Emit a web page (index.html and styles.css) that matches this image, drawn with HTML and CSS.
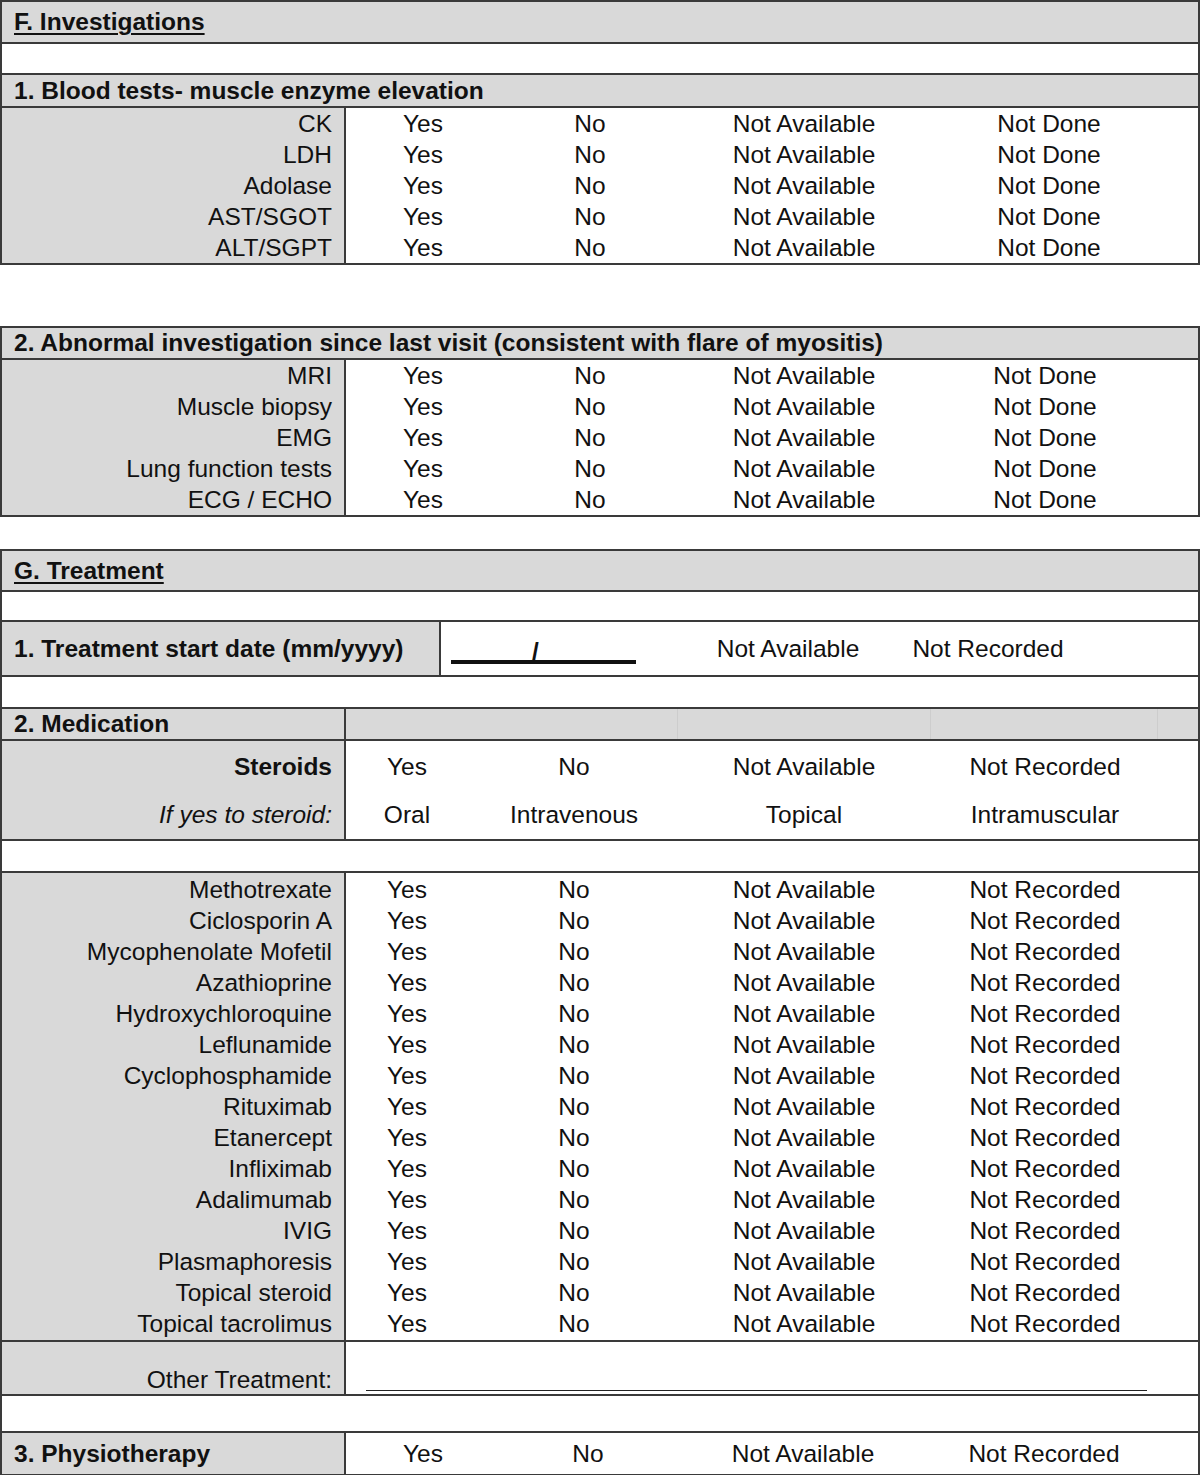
FILE: index.html
```html
<!DOCTYPE html>
<html lang="en">
<head>
<meta charset="utf-8">
<title>Investigations and Treatment</title>
<link rel="stylesheet" href="styles.css">
</head>
<body>
<div class="page">

  <section class="box box-f">
    <div class="row head"><span class="title">F. Investigations</span></div>
    <div class="row blank b1"></div>
    <div class="row sub">1. Blood tests- muscle enzyme elevation</div>
    <div class="opts">
      <div class="labels">
        <div class="ln">CK</div>
        <div class="ln">LDH</div>
        <div class="ln">Adolase</div>
        <div class="ln">AST/SGOT</div>
        <div class="ln">ALT/SGPT</div>
      </div>
      <div class="vals cols-a">
        <div>Yes</div><div>No</div><div>Not Available</div><div>Not Done</div>
        <div>Yes</div><div>No</div><div>Not Available</div><div>Not Done</div>
        <div>Yes</div><div>No</div><div>Not Available</div><div>Not Done</div>
        <div>Yes</div><div>No</div><div>Not Available</div><div>Not Done</div>
        <div>Yes</div><div>No</div><div>Not Available</div><div>Not Done</div>
      </div>
    </div>
  </section>

  <section class="box box-f2">
    <div class="row sub sub2">2. Abnormal investigation since last visit (consistent with flare of myositis)</div>
    <div class="opts">
      <div class="labels">
        <div class="ln">MRI</div>
        <div class="ln">Muscle biopsy</div>
        <div class="ln">EMG</div>
        <div class="ln">Lung function tests</div>
        <div class="ln">ECG / ECHO</div>
      </div>
      <div class="vals cols-b">
        <div>Yes</div><div>No</div><div>Not Available</div><div>Not Done</div>
        <div>Yes</div><div>No</div><div>Not Available</div><div>Not Done</div>
        <div>Yes</div><div>No</div><div>Not Available</div><div>Not Done</div>
        <div>Yes</div><div>No</div><div>Not Available</div><div>Not Done</div>
        <div>Yes</div><div>No</div><div>Not Available</div><div>Not Done</div>
      </div>
    </div>
  </section>

  <section class="box box-g">
    <div class="row head head-g"><span class="title">G. Treatment</span></div>
    <div class="row blank b2"></div>
    <div class="row split date-row">
      <div class="cell-label wide">1. Treatment start date (mm/yyyy)</div>
      <div class="date-vals">
        <span class="date-field"><span class="slash">/</span></span>
        <span class="dv dv1">Not Available</span>
        <span class="dv dv2">Not Recorded</span>
      </div>
    </div>
    <div class="row blank b3"></div>
    <div class="row split med-head">
      <div class="cell-label bold-left">2. Medication</div>
      <div class="med-head-cells">
        <div></div><div></div><div></div><div></div>
      </div>
    </div>
    <div class="row split steroid-row">
      <div class="labels steroid-labels">
        <div class="sl strong">Steroids</div>
        <div class="sl ital">If yes to steroid:</div>
      </div>
      <div class="vals cols-m steroid-vals">
        <div>Yes</div><div>No</div><div>Not Available</div><div>Not Recorded</div>
        <div>Oral</div><div>Intravenous</div><div>Topical</div><div>Intramuscular</div>
      </div>
    </div>
    <div class="row blank b4"></div>
    <div class="row opts med-list">
      <div class="labels">
        <div class="ln">Methotrexate</div>
        <div class="ln">Ciclosporin A</div>
        <div class="ln">Mycophenolate Mofetil</div>
        <div class="ln">Azathioprine</div>
        <div class="ln">Hydroxychloroquine</div>
        <div class="ln">Leflunamide</div>
        <div class="ln">Cyclophosphamide</div>
        <div class="ln">Rituximab</div>
        <div class="ln">Etanercept</div>
        <div class="ln">Infliximab</div>
        <div class="ln">Adalimumab</div>
        <div class="ln">IVIG</div>
        <div class="ln">Plasmaphoresis</div>
        <div class="ln">Topical steroid</div>
        <div class="ln">Topical tacrolimus</div>
      </div>
      <div class="vals cols-m">
        <div>Yes</div><div>No</div><div>Not Available</div><div>Not Recorded</div>
        <div>Yes</div><div>No</div><div>Not Available</div><div>Not Recorded</div>
        <div>Yes</div><div>No</div><div>Not Available</div><div>Not Recorded</div>
        <div>Yes</div><div>No</div><div>Not Available</div><div>Not Recorded</div>
        <div>Yes</div><div>No</div><div>Not Available</div><div>Not Recorded</div>
        <div>Yes</div><div>No</div><div>Not Available</div><div>Not Recorded</div>
        <div>Yes</div><div>No</div><div>Not Available</div><div>Not Recorded</div>
        <div>Yes</div><div>No</div><div>Not Available</div><div>Not Recorded</div>
        <div>Yes</div><div>No</div><div>Not Available</div><div>Not Recorded</div>
        <div>Yes</div><div>No</div><div>Not Available</div><div>Not Recorded</div>
        <div>Yes</div><div>No</div><div>Not Available</div><div>Not Recorded</div>
        <div>Yes</div><div>No</div><div>Not Available</div><div>Not Recorded</div>
        <div>Yes</div><div>No</div><div>Not Available</div><div>Not Recorded</div>
        <div>Yes</div><div>No</div><div>Not Available</div><div>Not Recorded</div>
        <div>Yes</div><div>No</div><div>Not Available</div><div>Not Recorded</div>
      </div>
    </div>
    <div class="row split other-row">
      <div class="cell-label other-label">Other Treatment:</div>
      <div class="other-field"><span class="other-line"></span></div>
    </div>
    <div class="row blank b5"></div>
    <div class="row split physio-row">
      <div class="cell-label bold-left">3. Physiotherapy</div>
      <div class="vals cols-p">
        <div>Yes</div><div>No</div><div>Not Available</div><div>Not Recorded</div>
      </div>
    </div>
  </section>

</div>
</body>
</html>
```

FILE: styles.css
```css
html, body {
  margin: 0;
  padding: 0;
  background: #ffffff;
}

body {
  font-family: "Liberation Sans", Arial, Helvetica, sans-serif;
  font-size: 24.5px;
  color: #111111;
}

.page {
  width: 1200px;
  display: flex;
  flex-direction: column;
}

.box {
  border: 2px solid #3a3a3a;
  box-sizing: border-box;
  width: 1200px;
  display: flex;
  flex-direction: column;
}

.box-f2 { margin-top: 61px; }
.box-g { margin-top: 32px; }

.row {
  border-bottom: 2px solid #3a3a3a;
  box-sizing: content-box;
}
.row:last-child { border-bottom: none; }

.head {
  background: #d9d9d9;
  height: 40px;
  display: flex;
  align-items: center;
  padding-left: 12px;
}
.head-g { height: 39px; }

.title {
  font-weight: bold;
  text-decoration: underline;
  text-decoration-thickness: 2px;
  text-underline-offset: 3px;
}

.blank { background: #ffffff; }
.b1 { height: 29px; }
.b2 { height: 28px; }
.b3 { height: 30px; }
.b4 { height: 30px; }
.b5 { height: 35px; }

.sub {
  background: #d9d9d9;
  height: 31px;
  line-height: 31px;
  font-weight: bold;
  padding-left: 12px;
}
.sub2 { height: 30px; line-height: 30px; }

.opts {
  display: flex;
}

.labels {
  width: 344px;
  flex: none;
  box-sizing: border-box;
  background: #d9d9d9;
  border-right: 2px solid #3a3a3a;
  text-align: right;
  padding-right: 12px;
}

.ln {
  height: 31px;
  line-height: 31px;
  white-space: nowrap;
}

.vals {
  display: grid;
  grid-auto-rows: 31px;
  line-height: 31px;
  text-align: center;
  white-space: nowrap;
}

.cols-a { grid-template-columns: 154px 180px 248px 242px; }
.cols-b { grid-template-columns: 154px 180px 248px 234px; }
.cols-m { grid-template-columns: 122px 212px 248px 234px; }
.cols-p { grid-template-columns: 154px 176px 254px 228px; }

.med-list .labels,
.med-list .vals { padding-top: 1px; padding-bottom: 1px; }

.split {
  display: flex;
}

.cell-label {
  width: 344px;
  flex: none;
  box-sizing: border-box;
  background: #d9d9d9;
  border-right: 2px solid #3a3a3a;
}

.wide { width: 439px; }

.date-row {
  height: 53px;
}
.date-row .cell-label {
  font-weight: bold;
  display: flex;
  align-items: center;
  padding-left: 12px;
}

.date-vals {
  display: flex;
  align-items: center;
  padding-left: 10px;
}

.date-field {
  display: block;
  width: 185px;
  height: 21px;
  border-bottom: 4px solid #111111;
  margin-top: 6px;
  box-sizing: content-box;
  font-weight: bold;
  line-height: 21px;
}
.slash {
  display: block;
  padding-left: 81px;
  line-height: 26px;
}

.dv {
  display: block;
  text-align: center;
  white-space: nowrap;
}
.dv1 { width: 200px; margin-left: 52px; }
.dv2 { width: 200px; }

.med-head {
  height: 30px;
  background: #d9d9d9;
}
.bold-left {
  font-weight: bold;
  padding-left: 12px;
  display: flex;
  align-items: center;
}
.med-head-cells {
  flex: 1;
  display: grid;
  grid-template-columns: 332px 253px 227px 1fr;
}
.med-head-cells > div {
  border-right: 1px solid #cdcdcd;
}
.med-head-cells > div:last-child { border-right: none; }

.steroid-row {
  height: 98px;
}
.steroid-labels {
  padding-top: 2px;
}
.sl {
  height: 48px;
  line-height: 48px;
}
.strong { font-weight: bold; }
.ital { font-style: italic; }
.steroid-vals {
  grid-auto-rows: 48px;
  line-height: 48px;
  padding-top: 2px;
}

.other-row {
  height: 52px;
}
.other-label {
  text-align: right;
  padding-right: 12px;
  display: flex;
  align-items: flex-end;
  justify-content: flex-end;
  line-height: 28px;
  padding-bottom: 0;
}
.other-field {
  flex: 1;
  display: flex;
  align-items: flex-end;
  padding-left: 20px;
  padding-bottom: 3px;
}
.other-line {
  display: block;
  width: 781px;
  border-bottom: 1.5px solid #222222;
}

.physio-row {
  height: 41px;
}
.physio-row .cell-label {
  height: 41px;
}
.cols-p {
  grid-auto-rows: 41px;
  line-height: 41px;
}
```
